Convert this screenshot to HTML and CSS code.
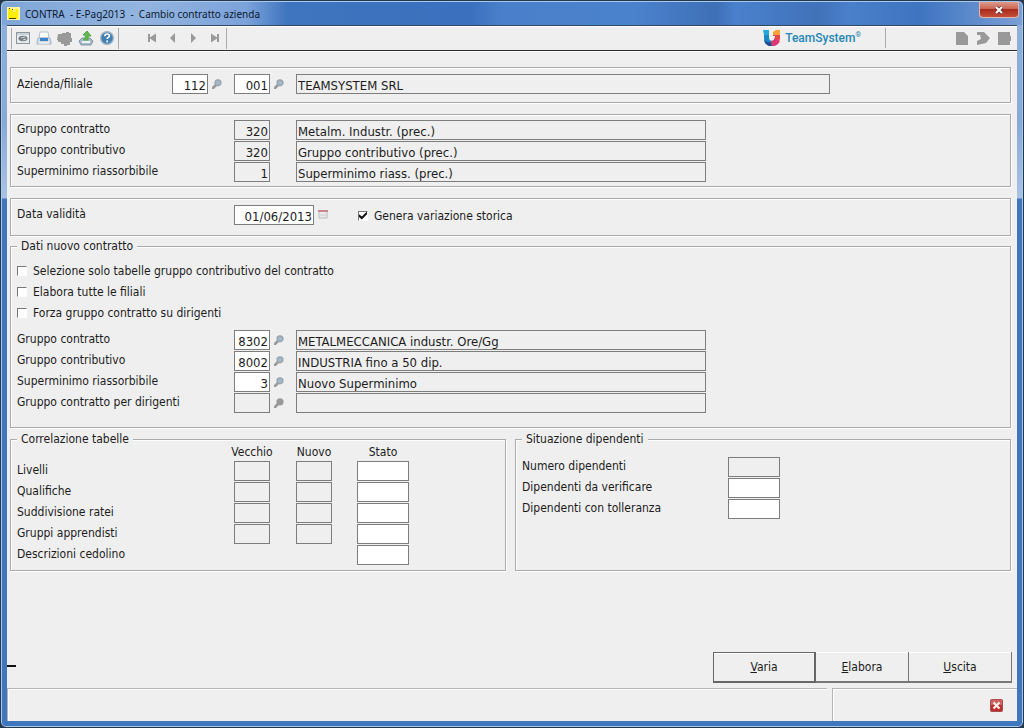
FILE: index.html
```html
<!DOCTYPE html>
<html lang="it">
<head>
<meta charset="utf-8">
<title>CONTRA - E-Pag2013 - Cambio contratto azienda</title>
<link rel="stylesheet" href="styles.css">
</head>
<body>
<svg width="0" height="0" class="defs" aria-hidden="true">
  <symbol id="lens" viewBox="0 0 10 10"><path d="M1 9 L4.500 5.500" stroke="#9a9a9a" stroke-width="2.600" stroke-linecap="round"/><circle cx="6" cy="3.800" r="3" fill="#a3b8c8" stroke="#98a3ab" stroke-width="1.200"/></symbol>
  <symbol id="lens-off" viewBox="0 0 10 10"><path d="M1 9 L4.500 5.500" stroke="#999" stroke-width="2.600" stroke-linecap="round"/><circle cx="6" cy="3.800" r="3.600" fill="#999"/></symbol>
</svg>
<div class="window">
  <header class="titlebar">
    <svg class="app-icon" viewBox="0 0 13 13"><rect width="13" height="13" fill="#fff79a"/><path d="M1 1h2v1h1v1h2v2h2v-3h3v10h-10z" fill="#ffee00"/><path d="M2 1h1v1h-1zM5 2h1v1h-1zM2 11h7v1h-7z" fill="#403c10"/></svg>
    <h1 class="title">CONTRA&nbsp; - E-Pag2013&nbsp; -&nbsp; Cambio contratto azienda</h1>
    <button class="close" type="button" aria-label="Chiudi"><svg viewBox="0 0 10 8" width="10" height="8"><path d="M2 1l6 6M8 1l-6 6" stroke="#5c3030" stroke-width="3.400"/><path d="M2 1l6 6M8 1l-6 6" stroke="#fff" stroke-width="2"/></svg></button>
  </header>
  <main class="client">
    <div class="toolbar">
      <div class="tools main-tools">
        <button class="tool" type="button" aria-label="Visualizza"><svg viewBox="0 0 16 16"><rect x="1.500" y="2.500" width="13" height="11" fill="#e6ebee" stroke="#8b979e"/><path d="M2 4h12" stroke="#a9bac5"/><ellipse cx="8" cy="8.500" rx="4.500" ry="2.700" fill="#777d80"/><path d="M6 8l4-1M8 10l3-1" stroke="#d4dadd"/></svg></button>
        <button class="tool" type="button" aria-label="Stampa"><svg viewBox="0 0 16 16"><path d="M4 2h8l1 6h-10z" fill="#fff" stroke="#b3c0cc"/><path d="M2 8h12l1 4v2h-14v-2z" fill="#d3dce5" stroke="#a9b6c3"/><path d="M4 8h8v3h-8z" fill="#3d83c9"/><path d="M3 13h10" stroke="#fff"/></svg></button>
        <button class="tool" type="button" aria-label="Anteprima" disabled><svg viewBox="0 0 16 16"><path d="M1 4h4v-1h4v-1h3v1h2v5h1v4h-2v3h-3v1h-3v-2h-3v-2h-3v-2h-1z" fill="#999"/></svg></button>
        <button class="tool" type="button" aria-label="Esporta"><svg viewBox="0 0 16 16"><path d="M1 11l3-3h8l3 3-2 4h-10z" fill="#a9bccb" stroke="#8195a5"/><path d="M4 12h8" stroke="#eef3f6" stroke-width="2"/><path d="M5 10h5v-4h3l-4-5-4 4h2c1 2 0 4-2 5z" fill="#61b84b" stroke="#55a546"/></svg></button>
        <button class="tool" type="button" aria-label="Guida"><svg viewBox="0 0 16 16"><circle cx="8" cy="8" r="6.300" fill="#3f80b5" stroke="#9fb1bf" stroke-width="1.400"/><path d="M5.800 6.200q0-2.200 2.300-2.200t2.300 1.900c0 1.500-2.200 1.600-2.200 3.200" fill="none" stroke="#fff" stroke-width="1.600"/><rect x="7.300" y="10.500" width="1.800" height="1.800" fill="#fff"/></svg></button>
      </div>
      <div class="tools nav-tools">
        <button class="tool" type="button" aria-label="Primo"><svg viewBox="0 0 16 16"><path d="M4 4h2v3.500l6-4v9l-6-4v3.500h-2z" fill="#999"/></svg></button>
        <button class="tool" type="button" aria-label="Precedente"><svg viewBox="0 0 16 16"><path d="M10 3v10l-5-5z" fill="#999"/></svg></button>
        <button class="tool" type="button" aria-label="Successivo"><svg viewBox="0 0 16 16"><path d="M5 3v10l5-5z" fill="#999"/></svg></button>
        <button class="tool" type="button" aria-label="Ultimo"><svg viewBox="0 0 16 16"><path d="M12 4h-2v3.500l-6-4v9l6-4v3.500h2z" fill="#999"/></svg></button>
      </div>
      <div class="brand">
        <svg viewBox="0 0 19 18" width="19" height="18"><path d="M2 1h5v8q0 3 4 3v5q-9 1-9-8z" fill="#1889c7"/><path d="M1 1h6v5h-5z" fill="#25a9d8"/><path d="M2 10q2 4 7 3l2 4q-8 1-9-7z" fill="#254b8f"/><path d="M11 4q4-3 7-1v6q0 8-8 8l-1-5q4 0 4-5h-2z" fill="#e9434d"/><path d="M11 3q3-3 7-2v5h-7z" fill="#f8a23a"/><path d="M10 17l-1-5q3 0 4-3l4 4q-2 4-7 4z" fill="#dc397a"/></svg>
        <span class="brand-name">TeamSystem<sup>®</sup></span>
      </div>
      <div class="tools end-tools">
        <button class="tool" type="button" aria-label="Nuovo documento" disabled><svg viewBox="0 0 16 16"><path d="M2 2h8l4 4v9h-12z" fill="#999"/></svg></button>
        <button class="tool" type="button" aria-label="Inoltra" disabled><svg viewBox="0 0 16 16"><path d="M2 2h7l6 6-4 5-9 2v-4l4-2-1-4h-3z" fill="#999"/></svg></button>
        <button class="tool" type="button" aria-label="Archivia" disabled><svg viewBox="0 0 16 16"><path d="M2 2h12v4h1v5h-1v4h-12z" fill="#999"/></svg></button>
      </div>
    </div>

    <form class="form">
      <section class="panel company">
        <div class="row">
          <label class="label short" for="az">Azienda/filiale</label>
          <span class="slot"><input class="field num" id="az" value="112"><button class="lookup" type="button" aria-label="Cerca azienda"><svg><use href="#lens"/></svg></button></span>
          <span class="slot"><input class="field num" value="001" aria-label="Filiale"><button class="lookup" type="button" aria-label="Cerca filiale"><svg><use href="#lens"/></svg></button></span>
          <input class="field wide" value="TEAMSYSTEM SRL" readonly aria-label="Ragione sociale">
        </div>
      </section>

      <section class="panel previous">
        <div class="row"><label class="label" for="p1">Gruppo contratto</label><span class="slot"><input class="field num" id="p1" value="320" readonly></span><input class="field desc" value="Metalm. Industr. (prec.)" readonly aria-label="Descrizione gruppo contratto"></div>
        <div class="row"><label class="label" for="p2">Gruppo contributivo</label><span class="slot"><input class="field num" id="p2" value="320" readonly></span><input class="field desc" value="Gruppo contributivo (prec.)" readonly aria-label="Descrizione gruppo contributivo"></div>
        <div class="row"><label class="label" for="p3">Superminimo riassorbibile</label><span class="slot"><input class="field num" id="p3" value="1" readonly></span><input class="field desc" value="Superminimo riass. (prec.)" readonly aria-label="Descrizione superminimo"></div>
      </section>

      <section class="panel validity">
        <div class="row">
          <label class="label" for="dv">Data validità</label>
          <span class="slot date-slot"><input class="field date" id="dv" value="01/06/2013"><button class="lookup" type="button" aria-label="Calendario"><svg viewBox="0 0 10 10"><path d="M1 1h8v7h-8z" fill="#ececec" stroke="#bbb"/><path d="M0 0h10v2h-10z" fill="#c78791"/><path d="M2 5h6" stroke="#ccc"/></svg></button></span>
          <label class="check"><input type="checkbox" checked>Genera variazione storica</label>
        </div>
      </section>

      <fieldset class="group new-contract">
        <legend>Dati nuovo contratto</legend>
        <div class="checks">
          <label class="check"><input type="checkbox">Selezione solo tabelle gruppo contributivo del contratto</label>
          <label class="check"><input type="checkbox">Elabora tutte le filiali</label>
          <label class="check"><input type="checkbox">Forza gruppo contratto su dirigenti</label>
        </div>
        <div class="row"><label class="label" for="n1">Gruppo contratto</label><span class="slot"><input class="field num" id="n1" value="8302"><button class="lookup" type="button" aria-label="Cerca gruppo contratto"><svg><use href="#lens"/></svg></button></span><input class="field desc" value="METALMECCANICA industr. Ore/Gg" readonly aria-label="Descrizione nuovo gruppo contratto"></div>
        <div class="row"><label class="label" for="n2">Gruppo contributivo</label><span class="slot"><input class="field num" id="n2" value="8002"><button class="lookup" type="button" aria-label="Cerca gruppo contributivo"><svg><use href="#lens"/></svg></button></span><input class="field desc" value="INDUSTRIA fino a 50 dip." readonly aria-label="Descrizione nuovo gruppo contributivo"></div>
        <div class="row"><label class="label" for="n3">Superminimo riassorbibile</label><span class="slot"><input class="field num" id="n3" value="3"><button class="lookup" type="button" aria-label="Cerca superminimo"><svg><use href="#lens"/></svg></button></span><input class="field desc" value="Nuovo Superminimo" readonly aria-label="Descrizione nuovo superminimo"></div>
        <div class="row"><label class="label" for="n4">Gruppo contratto per dirigenti</label><span class="slot"><input class="field num" id="n4" readonly><button class="lookup" type="button" disabled aria-label="Cerca gruppo dirigenti"><svg><use href="#lens-off"/></svg></button></span><input class="field desc" readonly aria-label="Descrizione gruppo dirigenti"></div>
      </fieldset>

      <div class="pair">
        <fieldset class="group">
          <legend>Correlazione tabelle</legend>
          <table class="tables">
            <colgroup><col class="c-name"><col class="c-code"><col class="c-code"><col class="c-state"></colgroup>
            <thead><tr><td></td><th>Vecchio</th><th>Nuovo</th><th>Stato</th></tr></thead>
            <tbody>
              <tr><th>Livelli</th><td><input class="field num" readonly aria-label="Livelli vecchio"></td><td><input class="field num" readonly aria-label="Livelli nuovo"></td><td><input class="field state" aria-label="Livelli stato"></td></tr>
              <tr><th>Qualifiche</th><td><input class="field num" readonly aria-label="Qualifiche vecchio"></td><td><input class="field num" readonly aria-label="Qualifiche nuovo"></td><td><input class="field state" aria-label="Qualifiche stato"></td></tr>
              <tr><th>Suddivisione ratei</th><td><input class="field num" readonly aria-label="Ratei vecchio"></td><td><input class="field num" readonly aria-label="Ratei nuovo"></td><td><input class="field state" aria-label="Ratei stato"></td></tr>
              <tr><th>Gruppi apprendisti</th><td><input class="field num" readonly aria-label="Apprendisti vecchio"></td><td><input class="field num" readonly aria-label="Apprendisti nuovo"></td><td><input class="field state" aria-label="Apprendisti stato"></td></tr>
              <tr><th>Descrizioni cedolino</th><td></td><td></td><td><input class="field state" aria-label="Cedolino stato"></td></tr>
            </tbody>
          </table>
        </fieldset>
        <fieldset class="group staff">
          <legend>Situazione dipendenti</legend>
          <div class="row"><label class="label" for="s1">Numero dipendenti</label><input class="field state" id="s1" readonly></div>
          <div class="row"><label class="label" for="s2">Dipendenti da verificare</label><input class="field state" id="s2"></div>
          <div class="row"><label class="label" for="s3">Dipendenti con tolleranza</label><input class="field state" id="s3"></div>
        </fieldset>
      </div>
    </form>

    <div class="actions">
      <span class="mark"></span>
      <button class="action default" type="button"><span><u>V</u>aria</span></button>
      <button class="action middle" type="button"><span><u>E</u>labora</span></button>
      <button class="action" type="button"><span><u>U</u>scita</span></button>
    </div>
    <footer class="status">
      <div class="status-main"></div>
      <div class="status-side"><button class="stop" type="button" aria-label="Interrompi"><svg viewBox="0 0 13 13" width="13" height="13"><rect x=".5" y=".5" width="12" height="12" rx="1" fill="#bd2e2e" stroke="#a85050"/><path d="M1 1h11v5h-11z" fill="#cf6260"/><path d="M3.500 3.500l6 6M9.500 3.500l-6 6" stroke="#fff3e8" stroke-width="2.200"/></svg></button></div>
    </footer>
  </main>
</div>
</body>
</html>
```
FILE: styles.css
```css
* { box-sizing: border-box; }
body {
  margin: 0;
  background: #26384c;
  color: #1c1c1c;
  font: 12px/16px "DejaVu Sans Condensed", "DejaVu Sans", sans-serif;
}
button, input { font: inherit; color: inherit; margin: 0; }
button { padding: 0; border: 0; background: none; }
.defs { position: absolute; }

.window {
  display: flex;
  flex-direction: column;
  min-height: 100vh;
  padding: 1px 6px 6px;
  border: 1px solid #26384c;
  border-radius: 6px;
  background: linear-gradient(#8fb2dc 0, #86a9d6 120px, #a9c3e4 197px, #3f76bc 198px, #3f76bc 100%);
  box-shadow: inset 0 0 0 1px #a8c8ec;
}
.titlebar {
  display: flex;
  align-items: center;
  gap: 5px;
  height: 23px;
  margin: 0 -5px;
  padding: 0 3px 0 5px;
  border-radius: 5px 5px 0 0;
  background: linear-gradient(90deg, #7fa6d8 0, #93b4df 14%, #7ba2da 24%, #3f74be 28%, #3a70be 46%, #4a80cb 49%, #4b82cc 62%, #3d70b6 70%, #4a80cd 72%, #3f72b8 80%, #4a7fca 83%, #3e74c0 90%, #7ba0d6 100%);
}
.app-icon { width: 13px; height: 13px; }
.title { flex: 1; margin: 0; font: 10px/16px "Noto Sans", sans-serif; color: #0c1a30; }
.close {
  align-self: flex-start;
  display: flex;
  align-items: center;
  justify-content: center;
  width: 40px;
  height: 16px;
  border: 1px solid #e3b5ac;
  border-top: 0;
  border-radius: 0 0 4px 4px;
  background: linear-gradient(#dc9a8c 0, #cc6553 45%, #ab2c1a 50%, #c2503b 100%);
}

.client {
  flex: 1;
  display: flex;
  flex-direction: column;
  border-top: 1px solid #33475f;
  background: #efefef;
}
.toolbar {
  display: flex;
  align-items: center;
  height: 25px;
  padding-bottom: 1px;
  border-top: 1px solid #fff;
  border-bottom: 1px solid #2c2c2c;
  box-shadow: 0 1px #fff;
}
.tools { display: flex; align-items: center; height: 21px; }
.tool { display: flex; width: 16px; height: 16px; }
.tool svg { width: 16px; height: 16px; }
.main-tools { gap: 5px; margin-left: 4px; padding: 0 3px; border: solid #aaa; border-width: 0 1px; }
.nav-tools { gap: 5px; padding: 0 3px 0 25px; border-right: 1px solid #aaa; }
.brand {
  display: flex;
  align-items: center;
  gap: 4px;
  margin-left: auto;
  padding-right: 24px;
  border-right: 1px solid #aaa;
}
.brand-name { font: 500 12px/20px Roboto, sans-serif; color: #2587b5; }
.brand-name sup { font-size: 7px; line-height: 1px; vertical-align: 5px; }
.end-tools { gap: 5px; padding: 0 5px 0 68px; }

.form { display: flex; flex-direction: column; padding: 16px 6px 0 3px; }
.panel, .group {
  min-width: 0;
  margin: 0;
  border: 1px solid #a9aca9;
  box-shadow: 1px 1px #fff, inset 1px 1px #fff;
}
.panel { margin-bottom: 11px; padding: 5px 6px 3px; }
.company { padding: 6px 6px 7px; }
.validity { padding: 6px 6px 9px; margin-bottom: 2px; }
.group { padding: 0 6px; }
legend { padding: 0 4px; background: #efefef; }

.row { display: flex; align-items: flex-start; height: 21px; }
.label { flex: 0 0 217px; padding-top: 1px; }
.label.short { flex-basis: 155px; padding-top: 2px; }
.slot { display: flex; flex: 0 0 62px; align-items: center; gap: 4px; }
.field {
  height: 20px;
  min-width: 0;
  padding: 2px 1px 0;
  border: 1px solid #7d7d7d;
  border-radius: 0;
  background: #fff;
  font-size: 13px;
  outline: 0;
}
.field:read-only { background: #efefef; }
.num { width: 36px; text-align: right; }
.date { width: 80px; text-align: right; }
.date-slot { flex-basis: 124px; }
.desc { flex: 0 1 410px; }
.wide { flex: 0 1 534px; }
.state { width: 52px; }
.lookup { display: flex; width: 10px; height: 10px; }
.lookup svg { width: 10px; height: 10px; }
.check { display: flex; align-items: center; gap: 6px; height: 21px; }
.check input {
  appearance: none;
  display: grid;
  width: 10px;
  height: 10px;
  border: 1px solid #fff;
  border-top-color: #777;
  border-left-color: #777;
  background: #fff;
}
.check input:checked::before {
  content: "";
  width: 8px;
  height: 8px;
  background: #111;
  clip-path: polygon(0 35%, 35% 62%, 100% 0, 100% 35%, 35% 100%, 0 70%);
}
.checks { padding: 6px 0 7px; }
.new-contract { padding-bottom: 13px; }

.pair { display: grid; grid-template-columns: 1fr 1fr; gap: 9px; padding-top: 3px; }
.tables { table-layout: fixed; width: 404px; border-collapse: collapse; margin-bottom: 4px; }
.tables th, .tables td { height: 21px; padding: 0; font-weight: normal; text-align: center; vertical-align: top; line-height: 16px; }
.tables thead th, .tables thead td { height: 14px; line-height: 10px; }
.tables tbody th { padding-top: 1px; text-align: left; }
.tables .field { display: block; margin: 0 auto; }
.c-name { width: 204px; }
.c-code { width: 62px; }
.c-state { width: 76px; }
.staff { padding-top: 10px; }
.staff .label { flex-basis: 206px; }

.actions { display: flex; align-items: center; margin-top: auto; padding: 0 5px 5px 0; }
.mark { width: 9px; height: 2px; margin: 0 auto 4px 0; background: #111; }
.action {
  width: 103px;
  height: 31px;
  border: solid #777;
  border-width: 0 1px 2px 0;
  box-shadow: inset 0 1px #fff;
}
.action.default { border: 1px solid #666; border-width: 1px 2px 2px 1px; }
.middle { width: 93px; }
.status { display: flex; gap: 5px; height: 33px; }
.status-main, .status-side { border: solid #b4b4b4; border-width: 1px 0 0 1px; box-shadow: inset 1px 1px #fff; }
.status-main { flex: 1; }
.status-side { flex: 0 0 185px; display: flex; align-items: center; justify-content: flex-end; padding-right: 14px; }
.stop { display: flex; }
```
